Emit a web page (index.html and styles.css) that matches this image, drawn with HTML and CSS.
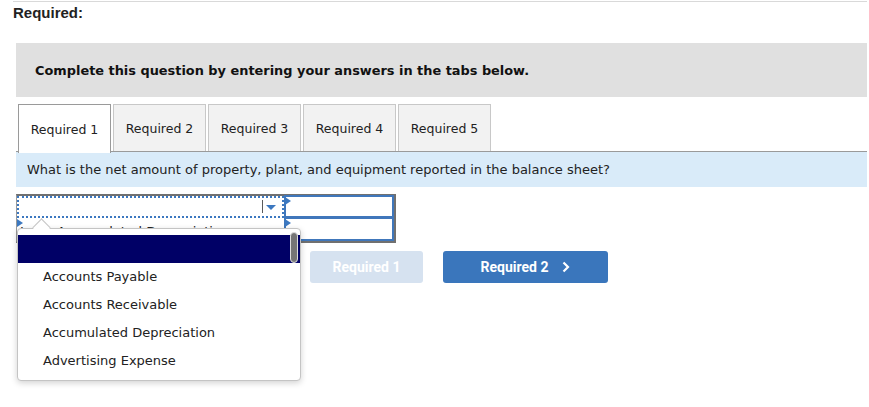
FILE: index.html
```html
<!DOCTYPE html>
<html>
<head>
<meta charset="utf-8">
<link rel="stylesheet" href="styles.css">
</head>
<body>
<div class="page">
  <div class="rule"></div>
  <div class="req-title">Required:</div>
  <div class="instructions">Complete this question by entering your answers in the tabs below.</div>
  <div class="tabs">
    <div class="tab active">Required 1</div>
    <div class="tab">Required 2</div>
    <div class="tab">Required 3</div>
    <div class="tab">Required 4</div>
    <div class="tab">Required 5</div>
  </div>
  <div class="question">What is the net amount of property, plant, and equipment reported in the balance sheet?</div>
  <div class="work">
    <div class="sheet">
      <div class="cell select-cell">
        <span class="sel-sep"></span>
        <span class="sel-arrow"></span>
      </div>
      <div class="cell input-cell"><span class="flag"></span></div>
      <div class="cell label-cell"><span class="flag"></span>Less: Accumulated Depreciation</div>
      <div class="cell input-cell"><span class="flag"></span></div>
    </div>
    <div class="dropdown">
      <span class="caret"></span>
      <div class="opt selected"></div>
      <div class="opt">Accounts Payable</div>
      <div class="opt">Accounts Receivable</div>
      <div class="opt">Accumulated Depreciation</div>
      <div class="opt">Advertising Expense</div>
      <span class="thumb"></span>
    </div>
    <div class="nav">
      <div class="btn disabled">Required 1</div>
      <div class="btn primary">Required 2 <svg class="chev" width="8" height="12" viewBox="0 0 8 12"><path d="M1.5 1.5 L6 6 L1.5 10.5" fill="none" stroke="#fff" stroke-width="2.2"/></svg></div>
    </div>
  </div>
</div>
</body>
</html>
```

FILE: styles.css
```css
html, body { margin: 0; padding: 0; background: #fff; }
body { font-family: "DejaVu Sans", Verdana, sans-serif; color: #222; font-size: 13px; }
.page { padding: 1px 2px 0 13px; }
.rule { height: 1px; background: #d9d9d9; }
.req-title {
  font-family: "Liberation Sans", Arial, sans-serif;
  font-weight: bold; font-size: 15px; line-height: 17px;
  margin-top: 2px; color: #222;
}
.instructions {
  margin: 22px 0 0 3px;
  height: 54px; background: #e0e0e0;
  display: flex; align-items: center;
  padding-left: 19px;
  font-weight: bold; font-size: 12.9px; color: #111;
}
.tabs { display: flex; gap: 2px; margin: 7px 0 0 5px; height: 47px; }
.tab {
  width: 91px; border: 1px solid #c8c8c8; border-bottom: none;
  background: #f2f2f2; display: flex; align-items: center; justify-content: center;
  font-size: 12.5px; color: #222;
}
.tab.active { background: #fff; border-color: #9a9a9a; position: relative; z-index: 1; height: 48px; }
.question {
  margin-left: 3px; border-top: 1px solid #9a9a9a;
  background: #d9ebf9; height: 35px; display: flex; align-items: center;
  padding-left: 11px; font-size: 13px; color: #222;
}
.work { position: relative; margin-left: 3px; padding-top: 7px; height: 210px; }
.sheet {
  width: 377px; border: 2px solid #707070; border-left: 1px solid #9a9a9a;
  display: grid; grid-template-columns: 267px 110px; grid-template-rows: 22px 23px;
}
.cell { position: relative; box-sizing: border-box; }
.select-cell { border: 2px dotted #3c78c0; }
.sel-sep { position: absolute; right: 19px; top: 2px; bottom: 3px; width: 1px; background: #5a5a5a; }
.sel-arrow {
  position: absolute; right: 6px; top: 7px; width: 0; height: 0;
  border-left: 5px solid transparent; border-right: 5px solid transparent; border-top: 5px solid #3c78c0;
}
.input-cell { border: 2px solid #4077bb; margin-top: -1px; }
.label-cell { padding: 6px 0 0 3px; font-size: 13px; color: #222; line-height: 16px; white-space: nowrap; overflow: hidden; }
.flag {
  position: absolute; left: -1px; top: 0px; width: 0; height: 0;
  border-top: 4px solid transparent; border-bottom: 4px solid transparent; border-left: 6px solid #3c78c0;
}
.label-cell .flag { left: 0; top: 1px; }
.dropdown {
  position: absolute; left: 1px; top: 41px; width: 282px; height: 145px;
  background: #fff; border: 1px solid #c4c4c4; border-radius: 4px;
  box-shadow: 0 2px 6px rgba(0,0,0,0.18);
  padding-top: 6px; box-sizing: content-box; z-index: 5;
}
.caret {
  position: absolute; left: 17px; top: -8px; width: 12px; height: 12px;
  background: #fff; border-left: 1px solid #c4c4c4; border-top: 1px solid #c4c4c4;
  transform: rotate(45deg);
}
.opt { height: 28px; line-height: 28px; padding-left: 25px; font-size: 13px; color: #222; position: relative; }
.opt.selected { background: #000066; height: 28px; }
.thumb { position: absolute; right: 2px; top: 3px; width: 8px; height: 31px; background: #767676; border-radius: 4px; border: 1px solid #ddd; box-sizing: border-box; }
.nav { display: flex; gap: 20px; margin: 8px 0 0 294px; }
.btn {
  height: 32px; border-radius: 3px; display: flex; align-items: center; justify-content: center;
  font-family: Roboto, "Liberation Sans", Arial, sans-serif; font-weight: bold; font-size: 14px; color: #fff;
}
.btn.disabled { width: 113px; background: #d6e2f0; }
.btn.primary { width: 165px; background: #3a76bc; gap: 0; }
.chev { margin-left: 14px; }
```
